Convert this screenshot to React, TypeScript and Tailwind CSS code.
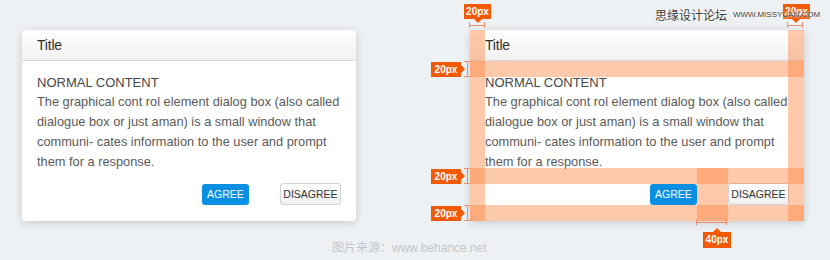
import React from 'react';

const font = { fontFamily: '"Liberation Sans", "Noto Sans CJK SC", sans-serif' };
const cjk = { fontFamily: '"Noto Sans CJK SC", sans-serif' };

const DialogCard: React.FC<{ children?: React.ReactNode }> = ({ children }) => (
  <div className="relative w-[334px] h-[191px] bg-white rounded-[4px] shadow-[0_2px_8px_rgba(0,0,0,0.16)] flex flex-col">
    <div className="h-[31px] flex items-center px-[15px] rounded-t-[4px] bg-gradient-to-b from-white to-[#f1f1f1] border-b border-[#dcdcdc]">
      <span className="text-[14px] text-[#2f2f2f] tracking-[-0.2px]">Title</span>
    </div>
    <div className="flex-1 flex flex-col px-[15px] pt-[15px] pb-[16px]">
      <h2 className="text-[13px] leading-[14px] text-[#474747] uppercase">Normal Content</h2>
      <p className="mt-[2px] text-[12.8px] leading-[20px] text-[#5a5a5a]">
        The graphical cont rol element dialog box (also called dialogue box or just aman) is a small window that
        communi- cates information to the user and prompt them for a response.
      </p>
      <div className="mt-auto flex justify-end gap-[31px]">
        <button className="w-[47px] h-[21px] rounded-[3px] bg-[#0a8fe3] text-white text-[10.5px] leading-none">
          AGREE
        </button>
        <button className="w-[61px] h-[22px] -mt-[1px] rounded-[3px] border border-[#d2d2d2] bg-gradient-to-b from-white to-[#f0f0f0] text-[#333] text-[10.5px] leading-none">
          DISAGREE
        </button>
      </div>
    </div>
    {children}
  </div>
);

const Tag: React.FC<{ className: string; label: string }> = ({ className, label }) => (
  <div
    className={`absolute bg-[#f25a05] text-white text-[10px] font-bold leading-none flex items-center justify-center ${className}`}
  >
    {label}
  </div>
);

export default function App() {
  return (
    <div className="relative w-[830px] h-[260px] bg-[#eef1f4] overflow-hidden" style={font}>
      <div className="flex gap-[114px] pl-[22px] pt-[30px]">
        <DialogCard />
        <DialogCard>
          {/* spacing guides */}
          <div className="absolute left-0 top-0 w-[15px] h-full bg-[#ff7a2f]/40" />
          <div className="absolute right-0 top-0 w-[16px] h-full bg-[#ff7a2f]/40" />
          <div className="absolute left-0 top-[31px] w-full h-[16px] bg-[#ff7a2f]/40" />
          <div className="absolute left-0 top-[138px] w-full h-[16px] bg-[#ff7a2f]/40" />
          <div className="absolute left-0 top-[175px] w-full h-[16px] bg-[#ff7a2f]/40" />
          <div className="absolute left-[227px] top-[138px] w-[31px] h-[53px] bg-[#ff7a2f]/40" />
        </DialogCard>
      </div>

      {/* top tags */}
      <Tag className="left-[464px] top-[4px] w-[27px] h-[15px]" label="20px" />
      <div className="absolute left-[474px] top-[19px] w-0 h-0 border-x-[4px] border-x-transparent border-t-[4px] border-t-[#f25a05]" />
      <div className="absolute left-[469px] top-[22px] w-[16px] h-[6px] border-x border-[#e8906a]" />
      <div className="absolute left-[469px] top-[25px] w-[16px] h-px bg-[#e8906a]" />

      <Tag className="left-[783px] top-[4px] w-[27px] h-[15px]" label="20px" />
      <div className="absolute left-[792px] top-[19px] w-0 h-0 border-x-[4px] border-x-transparent border-t-[4px] border-t-[#f25a05]" />
      <div className="absolute left-[787px] top-[22px] w-[16px] h-[6px] border-x border-[#e8906a]" />
      <div className="absolute left-[787px] top-[25px] w-[16px] h-px bg-[#e8906a]" />

      {/* side tags */}
      {[61, 168, 205].map((y) => (
        <React.Fragment key={y}>
          <div className="absolute left-[431px] w-[30px] h-[15px]" style={{ top: y + 1 }}>
            <Tag className="inset-0" label="20px" />
          </div>
          <div
            className="absolute left-[461px] w-0 h-0 border-y-[4px] border-y-transparent border-l-[4px] border-l-[#f25a05]"
            style={{ top: y + 4 }}
          />
          <div className="absolute left-[464px] w-[6px] h-[16px] border-y border-[#e8906a]" style={{ top: y }} />
          <div className="absolute left-[467px] w-px h-[16px] bg-[#e8906a]" style={{ top: y }} />
        </React.Fragment>
      ))}

      {/* bottom tag */}
      <div className="absolute left-[696px] top-[219px] w-[31px] h-[6px] border-x border-[#e8906a]" />
      <div className="absolute left-[696px] top-[222px] w-[31px] h-px bg-[#e8906a]" />
      <div className="absolute left-[713px] top-[228px] w-0 h-0 border-x-[4px] border-x-transparent border-b-[4px] border-b-[#f25a05]" />
      <Tag className="left-[703px] top-[232px] w-[28px] h-[16px]" label="40px" />

      {/* watermark, drawn over the tag */}
      <div className="absolute z-10 left-[655px] top-[6px] flex items-center gap-[6px] whitespace-nowrap text-[#3a3a3a] [text-shadow:0_0_2px_#fff,0_0_2px_#fff]">
        <span className="text-[12px] leading-[18px]" style={cjk}>
          思缘设计论坛
        </span>
        <span className="text-[8px] leading-[18px]">WWW.MISSYUAN.COM</span>
      </div>

      <div className="absolute left-[332px] top-[239px] whitespace-nowrap text-[12px] leading-[16px] text-[#c3c7cb]">
        <span style={cjk}>图片来源：</span>
        <span>www.behance.net</span>
      </div>
    </div>
  );
}
